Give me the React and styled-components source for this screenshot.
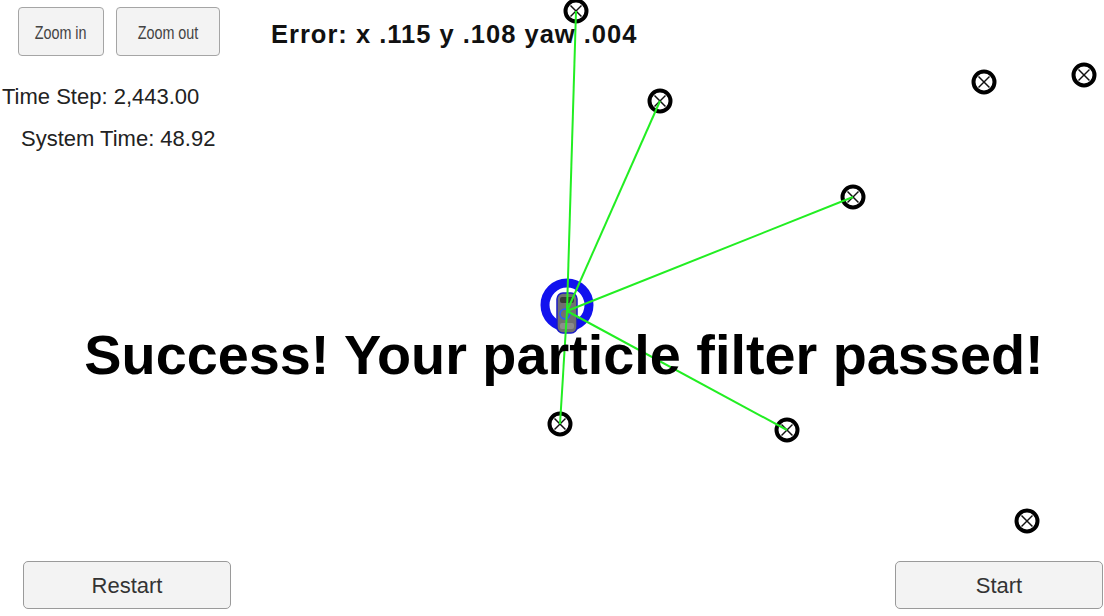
import React from "react";
import styled, { createGlobalStyle } from "styled-components";

const GlobalStyle = createGlobalStyle`
  html, body {
    margin: 0;
    padding: 0;
    background: #ffffff;
  }
  body {
    font-family: "Liberation Sans", Arial, sans-serif;
    color: #222;
  }
`;

const Screen = styled.div`
  position: relative;
  width: 1104px;
  height: 616px;
  overflow: hidden;
  display: flex;
  flex-direction: column;
  background: #ffffff;
`;

const Scene = styled.svg`
  position: absolute;
  left: 0;
  top: 0;
  width: 1104px;
  height: 616px;
  z-index: 0;
`;

const TopArea = styled.div`
  position: relative;
  z-index: 1;
  display: flex;
  align-items: flex-start;
  padding-top: 7px;
`;

const LeftPanel = styled.div`
  width: 220px;
  display: flex;
  flex-direction: column;
`;

const ZoomRow = styled.div`
  display: flex;
  gap: 12px;
  padding-left: 18px;
`;

const SmallButton = styled.button`
  width: ${(p) => p.$w}px;
  height: 49px;
  padding: 3px 0 0;
  display: flex;
  align-items: center;
  justify-content: center;
  background: #f3f3f3;
  border: 1px solid #a5a5a5;
  border-radius: 4px;
  font-family: "Liberation Sans", Arial, sans-serif;
  font-size: 17.5px;
  color: #444;
`;

const NarrowLabel = styled.span`
  display: inline-block;
  white-space: nowrap;
  transform: scaleX(0.82);
`;

const StatLine = styled.div`
  font-size: 22px;
  line-height: 22px;
  color: #222;
  white-space: nowrap;
  padding-left: ${(p) => p.$indent}px;
  margin-top: ${(p) => p.$gap}px;
`;

const ErrorTitle = styled.div`
  margin-left: 51px;
  margin-top: 15px;
  font-size: 25.5px;
  line-height: 25px;
  font-weight: bold;
  letter-spacing: 1px;
  color: #111;
  white-space: nowrap;
`;

const Middle = styled.div`
  position: relative;
  z-index: 1;
  flex: 1;
  display: flex;
  align-items: center;
  justify-content: center;
  padding-left: 24px;
`;

const Headline = styled.div`
  font-size: 55.8px;
  line-height: 55px;
  font-weight: bold;
  color: #000;
  white-space: nowrap;
  margin-bottom: 3px;
`;

const BottomBar = styled.div`
  position: relative;
  z-index: 1;
  display: flex;
  justify-content: space-between;
  padding: 0 1px 7px 23px;
`;

const BigButton = styled.button`
  width: 208px;
  height: 48px;
  padding: 2px 0 0;
  background: #f3f3f3;
  border: 1px solid #9a9a9a;
  border-radius: 5px;
  font-family: "Liberation Sans", Arial, sans-serif;
  font-size: 22px;
  color: #333;
`;

const origin = { x: 567, y: 311 };

const landmarks = [
  { x: 576, y: 11, seen: true },
  { x: 660, y: 101, seen: true },
  { x: 853, y: 197, seen: true },
  { x: 984, y: 82, seen: false },
  { x: 1084, y: 75, seen: false },
  { x: 560, y: 424, seen: true },
  { x: 787, y: 430, seen: true },
  { x: 1027, y: 521, seen: false },
];

function Landmark({ x, y }) {
  const d = 5.5;
  return (
    <g>
      <circle cx={x} cy={y} r={10.5} fill="#fff" stroke="#000" strokeWidth={4} />
      <line x1={x - d} y1={y - d} x2={x + d} y2={y + d} stroke="#111" strokeWidth={1.5} />
      <line x1={x - d} y1={y + d} x2={x + d} y2={y - d} stroke="#111" strokeWidth={1.5} />
    </g>
  );
}

function Car() {
  return (
    <g>
      <circle cx={567} cy={305} r={22} fill="none" stroke="#1212ee" strokeWidth={9} />
      <rect x={557} y={293} width={20} height={40} rx={6} fill="#707070" stroke="#1a1ac8" strokeWidth={1.5} />
      <rect x={560} y={297} width={14} height={6} rx={2} fill="#3a3a3a" />
      <rect x={560} y={323} width={14} height={6} rx={2} fill="#8c8c8c" />
      <circle cx={565} cy={314} r={5} fill="none" stroke="#2a5cff" strokeWidth={1.5} />
    </g>
  );
}

export default function App() {
  return (
    <>
      <GlobalStyle />
      <Screen>
        <Scene viewBox="0 0 1104 616">
          {landmarks.map((l, i) => (
            <Landmark key={i} x={l.x} y={l.y} />
          ))}
          <Car />
          {landmarks
            .filter((l) => l.seen)
            .map((l, i) => (
              <line
                key={i}
                x1={origin.x}
                y1={origin.y}
                x2={l.x}
                y2={l.y}
                stroke="#22ee22"
                strokeWidth={2}
              />
            ))}
        </Scene>
        <TopArea>
          <LeftPanel>
            <ZoomRow>
              <SmallButton $w={86}>
                <NarrowLabel>Zoom in</NarrowLabel>
              </SmallButton>
              <SmallButton $w={104}>
                <NarrowLabel>Zoom out</NarrowLabel>
              </SmallButton>
            </ZoomRow>
            <StatLine $indent={2} $gap={30}>Time Step: 2,443.00</StatLine>
            <StatLine $indent={21} $gap={20}>System Time: 48.92</StatLine>
          </LeftPanel>
          <ErrorTitle>Error: x .115 y .108 yaw .004</ErrorTitle>
        </TopArea>
        <Middle>
          <Headline>Success! Your particle filter passed!</Headline>
        </Middle>
        <BottomBar>
          <BigButton>Restart</BigButton>
          <BigButton>Start</BigButton>
        </BottomBar>
      </Screen>
    </>
  );
}
